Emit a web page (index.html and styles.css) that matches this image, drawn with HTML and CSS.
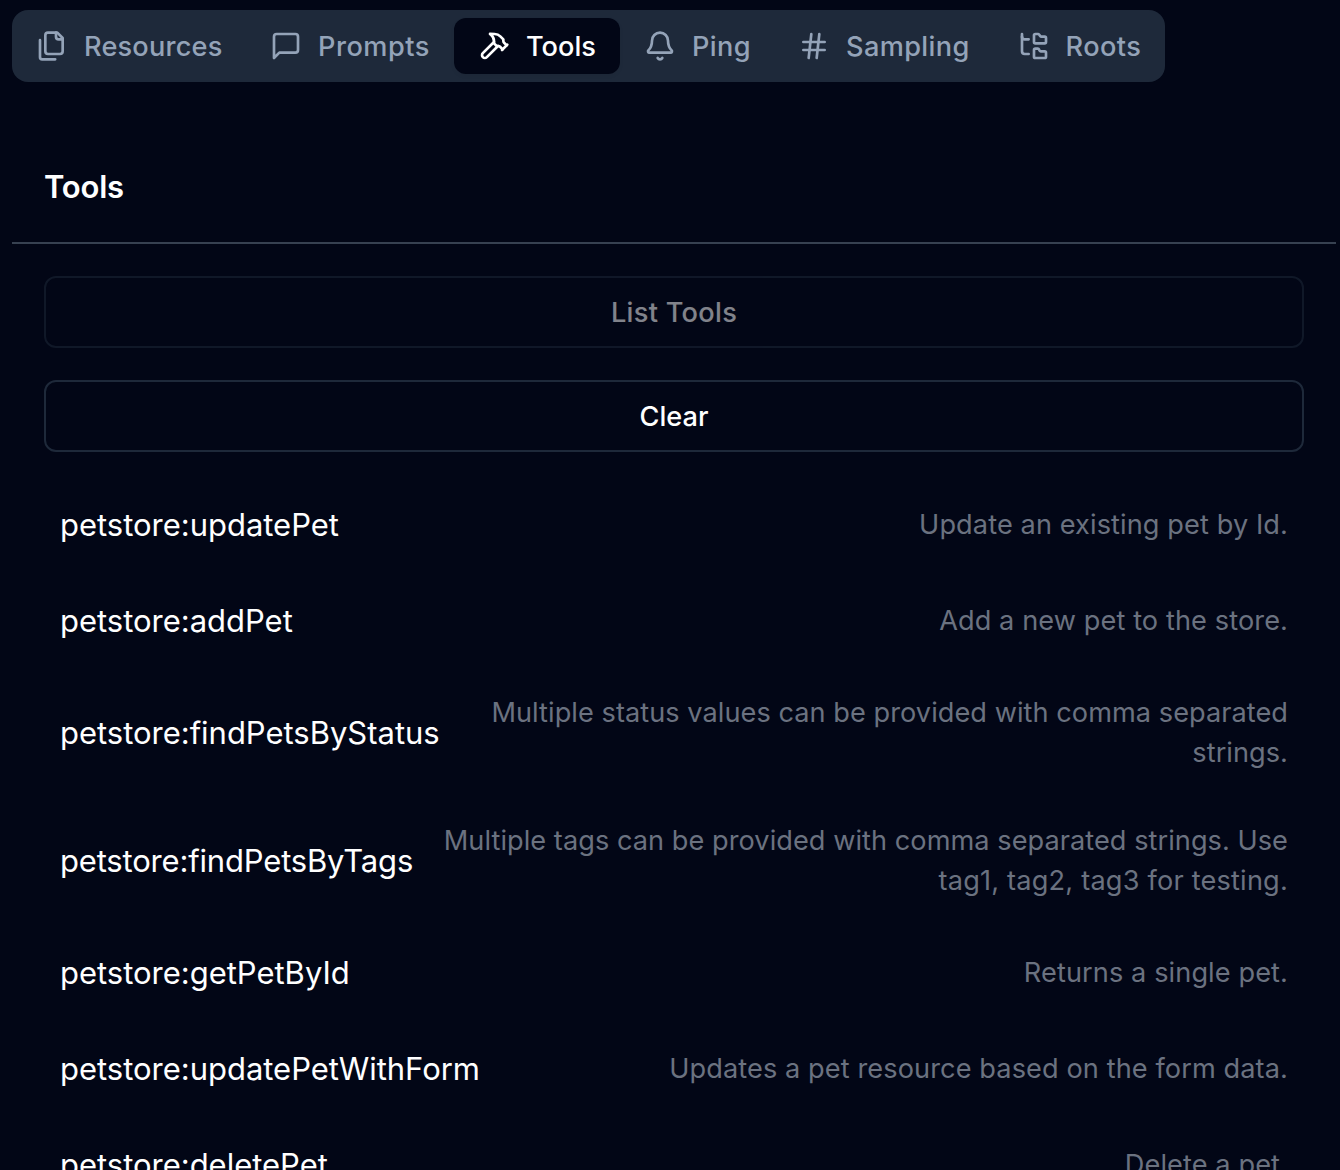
FILE: index.html
```html
<!DOCTYPE html>
<html lang="en">
<head>
<meta charset="utf-8">
<title>Tools</title>
<link rel="stylesheet" href="styles.css">
</head>
<body>
<nav class="tabs" role="tablist">
  <button class="tab tab-resources" role="tab">
    <svg class="icon" viewBox="0 0 24 24"><path d="M20 7h-3a2 2 0 0 1-2-2V2"/><path d="M9 18a2 2 0 0 1-2-2V4a2 2 0 0 1 2-2h7l4 4v10a2 2 0 0 1-2 2Z"/><path d="M3 7.6v12.8A1.6 1.6 0 0 0 4.6 22h9.8"/></svg>
    <span>Resources</span>
  </button>
  <button class="tab tab-prompts" role="tab">
    <svg class="icon" viewBox="0 0 24 24"><path d="M21 15a2 2 0 0 1-2 2H7l-4 4V5a2 2 0 0 1 2-2h14a2 2 0 0 1 2 2z"/></svg>
    <span>Prompts</span>
  </button>
  <button class="tab tab-tools active" role="tab" aria-selected="true">
    <svg class="icon" viewBox="0 0 24 24"><path d="m15 12-8.373 8.373a1 1 0 1 1-3-3L12 9"/><path d="m18 15 4-4"/><path d="m21.5 11.5-1.914-1.914A2 2 0 0 1 19 8.172V7l-2.26-2.26a6 6 0 0 0-4.202-1.756L9 2.96l.92.82A6.18 6.18 0 0 1 12 8.4V10l2 2h1.172a2 2 0 0 1 1.414.586L18.5 14.5"/></svg>
    <span>Tools</span>
  </button>
  <button class="tab tab-ping" role="tab">
    <svg class="icon" viewBox="0 0 24 24"><path d="M10.268 21a2 2 0 0 0 3.464 0"/><path d="M3.262 15.326A1 1 0 0 0 4 17h16a1 1 0 0 0 .74-1.673C19.41 13.956 18 12.499 18 8A6 6 0 0 0 6 8c0 4.499-1.411 5.956-2.738 7.326"/></svg>
    <span>Ping</span>
  </button>
  <button class="tab tab-sampling" role="tab">
    <svg class="icon" viewBox="0 0 24 24"><path d="M4 9h16M4 15h16M10 3 8 21M16 3l-2 18"/></svg>
    <span>Sampling</span>
  </button>
  <button class="tab tab-roots" role="tab">
    <svg class="icon" viewBox="0 0 24 24"><path d="M20 10a1 1 0 0 0 1-1V6a1 1 0 0 0-1-1h-2.5a1 1 0 0 1-.8-.4l-.9-1.2A1 1 0 0 0 15 3h-2a1 1 0 0 0-1 1v5a1 1 0 0 0 1 1Z"/><path d="M20 21a1 1 0 0 0 1-1v-3a1 1 0 0 0-1-1h-2.9a1 1 0 0 1-.88-.55l-.42-.85a1 1 0 0 0-.92-.6H13a1 1 0 0 0-1 1v5a1 1 0 0 0 1 1Z"/><path d="M3 5a2 2 0 0 0 2 2h3"/><path d="M3 3v13a2 2 0 0 0 2 2h3"/></svg>
    <span>Roots</span>
  </button>
</nav>
<main class="panel">
  <header class="panel-header"><h3>Tools</h3></header>
  <div class="panel-body">
    <button class="btn btn-list" disabled>List Tools</button>
    <button class="btn">Clear</button>
    <div class="tool-list">
      <div class="tool"><span class="name">petstore:updatePet</span><span class="desc">Update an existing pet by Id.</span></div>
      <div class="tool"><span class="name">petstore:addPet</span><span class="desc">Add a new pet to the store.</span></div>
      <div class="tool"><span class="name">petstore:findPetsByStatus</span><span class="desc desc-long">Multiple status values can be provided with comma separated strings.</span></div>
      <div class="tool"><span class="name name-tight">petstore:findPetsByTags</span><span class="desc desc-long">Multiple tags can be provided with comma separated strings. Use <span class="desc-tags">tag1, tag2, tag3 for testing.</span></span></div>
      <div class="tool"><span class="name">petstore:getPetById</span><span class="desc">Returns a single pet.</span></div>
      <div class="tool"><span class="name">petstore:updatePetWithForm</span><span class="desc">Updates a pet resource based on the form data.</span></div>
      <div class="tool"><span class="name">petstore:deletePet</span><span class="desc">Delete a pet.</span></div>
    </div>
  </div>
</main>
</body>
</html>
```
FILE: styles.css
```css
* { box-sizing: border-box; }

body {
  margin: 0;
  height: 1170px;
  overflow: hidden;
  padding: 10px 4px 0 12px;
  background: #020616;
  color: #fff;
  font-family: Inter, sans-serif;
}

button {
  margin: 0;
  border: 0;
  background: none;
  color: inherit;
  font-family: inherit;
}

/* Tab bar */
.tabs {
  display: flex;
  align-items: center;
  width: 1153px;
  height: 72px;
  border-radius: 16px;
  background: #1e293a;
  color: #94a3b8;
}

.tab {
  display: flex;
  flex: none;
  align-items: center;
  gap: 16px;
  height: 56px;
  padding: 0 0 0 24px;
  border-radius: 12px;
  font-size: 27.15px;
  font-weight: 500;
  line-height: 40px;
  white-space: nowrap;
}

.tab span { padding-top: 2px; }

.tab.active {
  background: #020616;
  color: #fff;
  box-shadow: 0 2px 4px rgba(0, 0, 0, 0.05);
}

.tab-resources { width: 234px; letter-spacing: 0.2px; }
.tab-prompts { width: 208px; letter-spacing: 0.5px; }
.tab-tools { width: 166px; }
.tab-ping { width: 154px; letter-spacing: 0.35px; }
.tab-sampling { width: 219.5px; letter-spacing: 0.37px; }
.tab-roots { width: 171.5px; letter-spacing: 0.45px; }

.icon {
  flex: none;
  width: 32px;
  height: 32px;
  fill: none;
  stroke: currentColor;
  stroke-width: 2;
  stroke-linecap: round;
  stroke-linejoin: round;
}

/* Tools panel */
.panel { margin-top: 48px; }

.panel-header {
  padding: 33px 32px 31px;
  border-bottom: 2px solid #374151;
}

.panel-header h3 {
  margin: 0;
  font-size: 31px;
  font-weight: 600;
  line-height: 48px;
  letter-spacing: -0.2px;
}

.panel-body {
  display: flex;
  flex-direction: column;
  gap: 32px;
  padding: 32px;
}

.btn {
  width: 100%;
  height: 72px;
  border: 2px solid #1e293a;
  border-radius: 12px;
  font-size: 27.15px;
  font-weight: 500;
}

.btn-list { letter-spacing: 0.3px; }
.btn:disabled { opacity: 0.5; }

.tool-list {
  display: flex;
  flex-direction: column;
  gap: 16px;
}

.tool {
  display: flex;
  align-items: center;
  justify-content: space-between;
  padding: 17px 16px 15px;
}

.name {
  flex: none;
  font-size: 31px;
  line-height: 48px;
  letter-spacing: -0.02px;
}

.name-tight { letter-spacing: -0.18px; }

.desc {
  color: #6b7280;
  font-size: 27.15px;
  line-height: 40px;
  letter-spacing: 0.1px;
  text-align: right;
}

.desc-long { letter-spacing: 0.05px; }
.desc-tags { letter-spacing: 0.2px; }
```
